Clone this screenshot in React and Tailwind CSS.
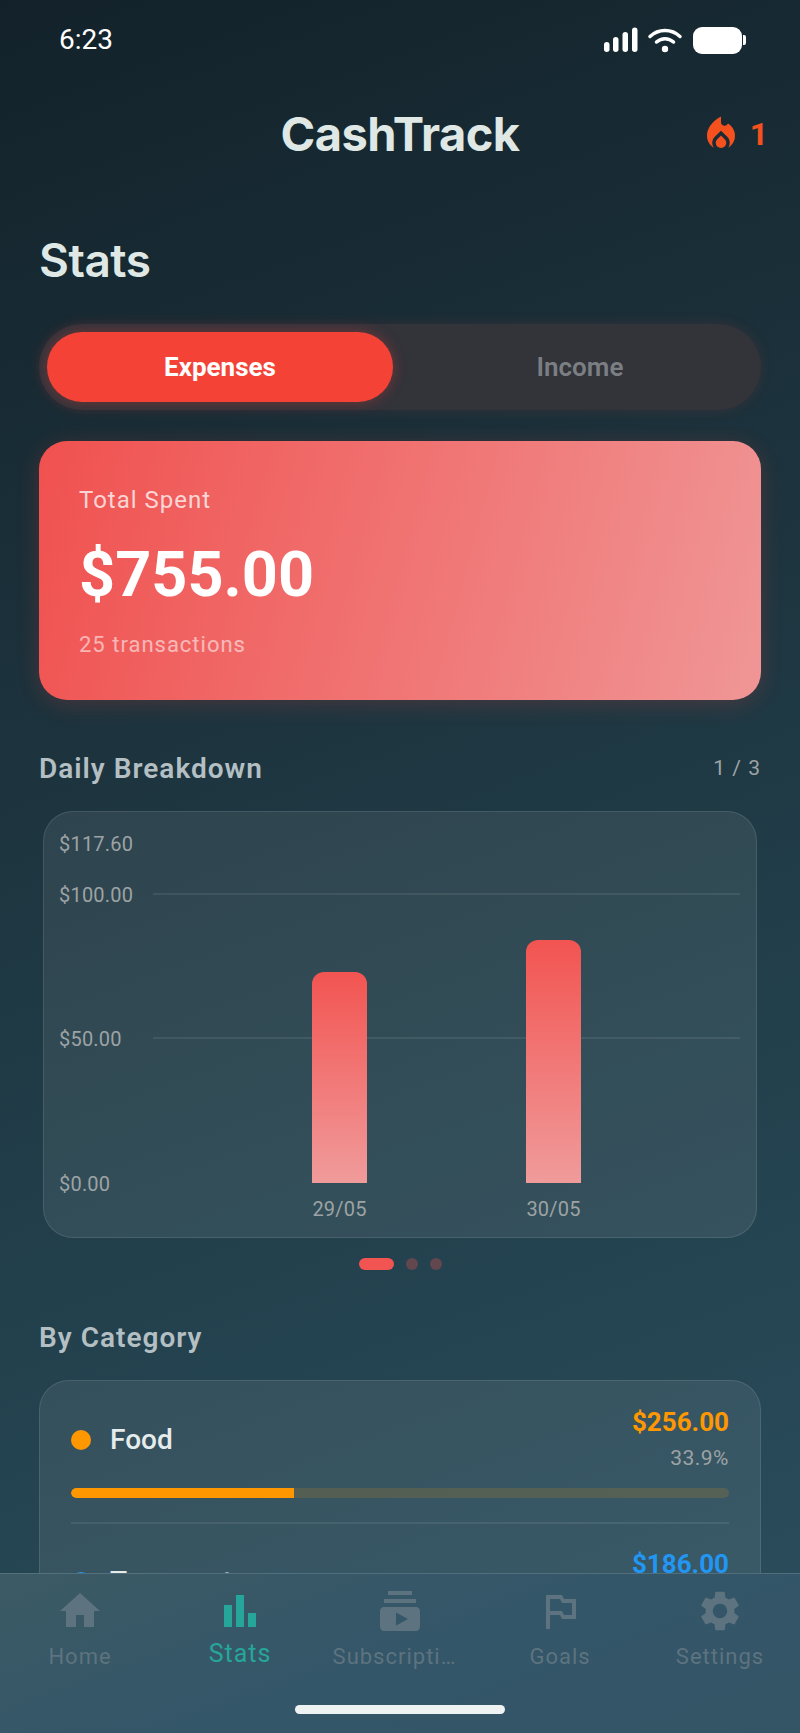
import { MdHome, MdBarChart, MdSubscriptions, MdOutlinedFlag, MdSettings, MdLocalFireDepartment } from 'react-icons/md';

const navItems = [
  { label: 'Home', icon: MdHome },
  { label: 'Stats', icon: MdBarChart, active: true },
  { label: 'Subscripti…', icon: MdSubscriptions },
  { label: 'Goals', icon: MdOutlinedFlag },
  { label: 'Settings', icon: MdSettings },
];

function StatusBar() {
  return (
    <div className="flex h-[80px] items-center justify-between pl-[59px] pr-[54px]">
      <span className="text-[28px] font-normal text-white">6:23</span>
      <div className="flex items-center">
        <svg width="36" height="26" viewBox="0 0 36 26" fill="#fff">
          <rect x="2" y="15" width="5.500" height="10" rx="2.750" />
          <rect x="11" y="10" width="5.500" height="15" rx="2.750" />
          <rect x="20.500" y="5" width="5.500" height="20" rx="2.750" />
          <rect x="30" y="0.500" width="5.500" height="24.500" rx="2.750" />
        </svg>
        <svg className="ml-[9px]" width="36" height="26" viewBox="0 0 36 26" fill="none" stroke="#fff" strokeWidth="3.500" strokeLinecap="round">
          <path d="M3 9.500C11.500 1.500 24.500 1.500 33 9.500" />
          <path d="M9.500 15C14.500 10.500 21.500 10.500 26.500 15" />
          <circle cx="18" cy="22" r="3.200" fill="#fff" stroke="none" />
        </svg>
        <div className="ml-[10px] h-[27px] w-[49px] rounded-[9px] bg-white" />
        <div className="ml-px h-[10px] w-[3px] rounded-r-[2px] bg-white" />
      </div>
    </div>
  );
}

function Header() {
  return (
    <div className="relative mt-[14px] flex h-[80px] items-center justify-center">
      <h1 className="font-[family-name:Inter,sans-serif] text-[47px] font-bold tracking-[-0.5px] text-[#dfe8e4]">CashTrack</h1>
      <div className="absolute right-[32px] top-[16px] flex items-center gap-[8px]">
        <MdLocalFireDepartment className="text-[#f4511e]" size={42} />
        <span className="text-[32px] font-bold text-[#f4511e]">1</span>
      </div>
    </div>
  );
}

function Toggle() {
  return (
    <div className="mt-[38px] flex h-[86px] rounded-full bg-[#33333a] p-[8px] shadow-[0_0_14px_rgba(244,67,54,0.12)]">
      <div className="flex w-[346px] items-center justify-center rounded-full bg-[#f44336] text-[26px] font-bold text-white shadow-[0_0_14px_rgba(244,67,54,0.35)]">
        Expenses
      </div>
      <div className="flex flex-1 items-center justify-center pl-[14px] text-[26px] font-semibold text-[#7b7f83]">Income</div>
    </div>
  );
}

function TotalCard() {
  return (
    <div className="mt-[31px] h-[259px] rounded-[28px] bg-[linear-gradient(105deg,#f0514f,#f09696)] pl-[40px] pt-[43px] shadow-[0_4px_22px_rgba(244,67,54,0.2)]">
      <p className="text-[24px] leading-[32px] tracking-[1px] text-white/75">Total Spent</p>
      <p className="mt-[21px] text-[63px] font-bold leading-[76px] text-white">$755.00</p>
      <p className="mt-[17px] text-[22px] leading-[30px] tracking-[1px] text-white/55">25 transactions</p>
    </div>
  );
}

function Chart() {
  const labelClass = 'absolute left-[15px] text-[20px] leading-[24px] tracking-[0.2px] text-[#9da3a5]';
  return (
    <div className="relative mx-[4px] mt-[24px] h-[427px] rounded-[30px] border border-white/10 bg-white/8">
      <span className={`${labelClass} top-[20px]`}>$117.60</span>
      <span className={`${labelClass} top-[71px]`}>$100.00</span>
      <span className={`${labelClass} top-[215px]`}>$50.00</span>
      <span className={`${labelClass} top-[360px]`}>$0.00</span>
      <div className="absolute left-[109px] right-[16px] top-[81px] h-[2px] bg-white/8" />
      <div className="absolute left-[109px] right-[16px] top-[225px] h-[2px] bg-white/8" />
      <div className="absolute bottom-[54px] left-[268px] h-[211px] w-[55px] rounded-t-[12px] bg-[linear-gradient(180deg,#f25451,#f09b9b)]" />
      <div className="absolute bottom-[54px] left-[482px] h-[243px] w-[55px] rounded-t-[12px] bg-[linear-gradient(180deg,#f25451,#f09b9b)]" />
      <span className={`${labelClass} top-[385px] !left-[268px] w-[55px] text-center`}>29/05</span>
      <span className={`${labelClass} top-[385px] !left-[482px] w-[55px] text-center`}>30/05</span>
    </div>
  );
}

function CategoryRow({ name, amount, percent, color, track, width }) {
  return (
    <div>
      <div className="flex h-[76px] items-center justify-between">
        <div className="flex items-center gap-[19px]">
          <span className={`h-[20px] w-[20px] rounded-full ${color}`} />
          <span className="text-[28px] font-medium text-[#e6ecec]">{name}</span>
        </div>
        <div className="text-right">
          <p className={`text-[26px] font-bold leading-[34px] ${color === 'bg-[#ff9800]' ? 'text-[#ff9800]' : 'text-[#2196f3]'}`}>{amount}</p>
          <p className="mt-[2px] text-[21px] leading-[34px] tracking-[0.5px] text-[#9da3a5]">{percent}</p>
        </div>
      </div>
      <div className={`mt-[10px] h-[10px] overflow-hidden rounded-full ${track}`}>
        <div className={`h-full rounded-l-full ${color}`} style={{ width }} />
      </div>
    </div>
  );
}

function BottomNav() {
  return (
    <div className="absolute inset-x-0 bottom-0 h-[160px] border-t border-white/15 bg-[linear-gradient(160deg,#3b5a64,#345669_50%,#335566)]">
      <div className="grid grid-cols-5">
        {navItems.map(({ label, icon: Icon, active }) => (
          <div key={label} className={`flex flex-col items-center pt-[13px] ${active ? 'text-[#26a69a]' : 'text-[#5d737f]'}`}>
            <Icon size={48} />
            {active ? (
              <span className="mt-[4px] text-[25px] leading-[30px] tracking-[1px]">{label}</span>
            ) : (
              <span className={`mt-[7px] text-[22px] leading-[30px] tracking-[1px] ${label === 'Subscripti…' ? 'mr-[11px]' : ''}`}>{label}</span>
            )}
          </div>
        ))}
      </div>
      <div className="absolute bottom-[19px] left-[295px] h-[9px] w-[210px] rounded-full bg-[#eff2f2]" />
    </div>
  );
}

export default function App() {
  return (
    <div className="relative h-[1733px] w-[800px] overflow-hidden bg-[linear-gradient(160deg,#13222a_0%,#1c323c_35%,#22404c_65%,#2c4f5f_100%)] font-[family-name:Roboto,sans-serif]">
      <StatusBar />
      <Header />
      <div className="px-[39px]">
        <h2 className="mt-[60px] font-[family-name:Inter,sans-serif] text-[46px] font-semibold leading-[52px] tracking-[-0.5px] text-[#dfe8e4]">Stats</h2>
        <Toggle />
        <TotalCard />

        <div className="mt-[51px] flex h-[36px] items-center justify-between">
          <span className="text-[28px] font-semibold tracking-[1px] text-[#b4bfc3]">Daily Breakdown</span>
          <span className="text-[21px] tracking-[1px] text-[#9da3a5]">1 / 3</span>
        </div>
        <Chart />

        <div className="mt-[20px] flex items-center justify-center gap-[12px]">
          <span className="h-[12px] w-[35px] rounded-full bg-[#f25451]" />
          <span className="h-[12px] w-[12px] rounded-full bg-[#f25451]/30" />
          <span className="h-[12px] w-[12px] rounded-full bg-[#f25451]/30" />
        </div>

        <p className="mt-[50px] text-[28px] font-semibold leading-[36px] tracking-[1px] text-[#b4bfc3]">By Category</p>
        <div className="mt-[24px] h-[400px] rounded-[30px] border border-white/10 bg-white/8 px-[31px] pt-[21px]">
          <CategoryRow name="Food" amount="$256.00" percent="33.9%" color="bg-[#ff9800]" track="bg-[#ff9800]/15" width="33.9%" />
          <div className="mt-[24px] h-[2px] bg-white/8" />
          <div className="mt-[20px]">
            <CategoryRow name="Transport" amount="$186.00" percent="24.6%" color="bg-[#2196f3]" track="bg-[#2196f3]/15" width="24.6%" />
          </div>
        </div>
      </div>
      <BottomNav />
    </div>
  );
}
